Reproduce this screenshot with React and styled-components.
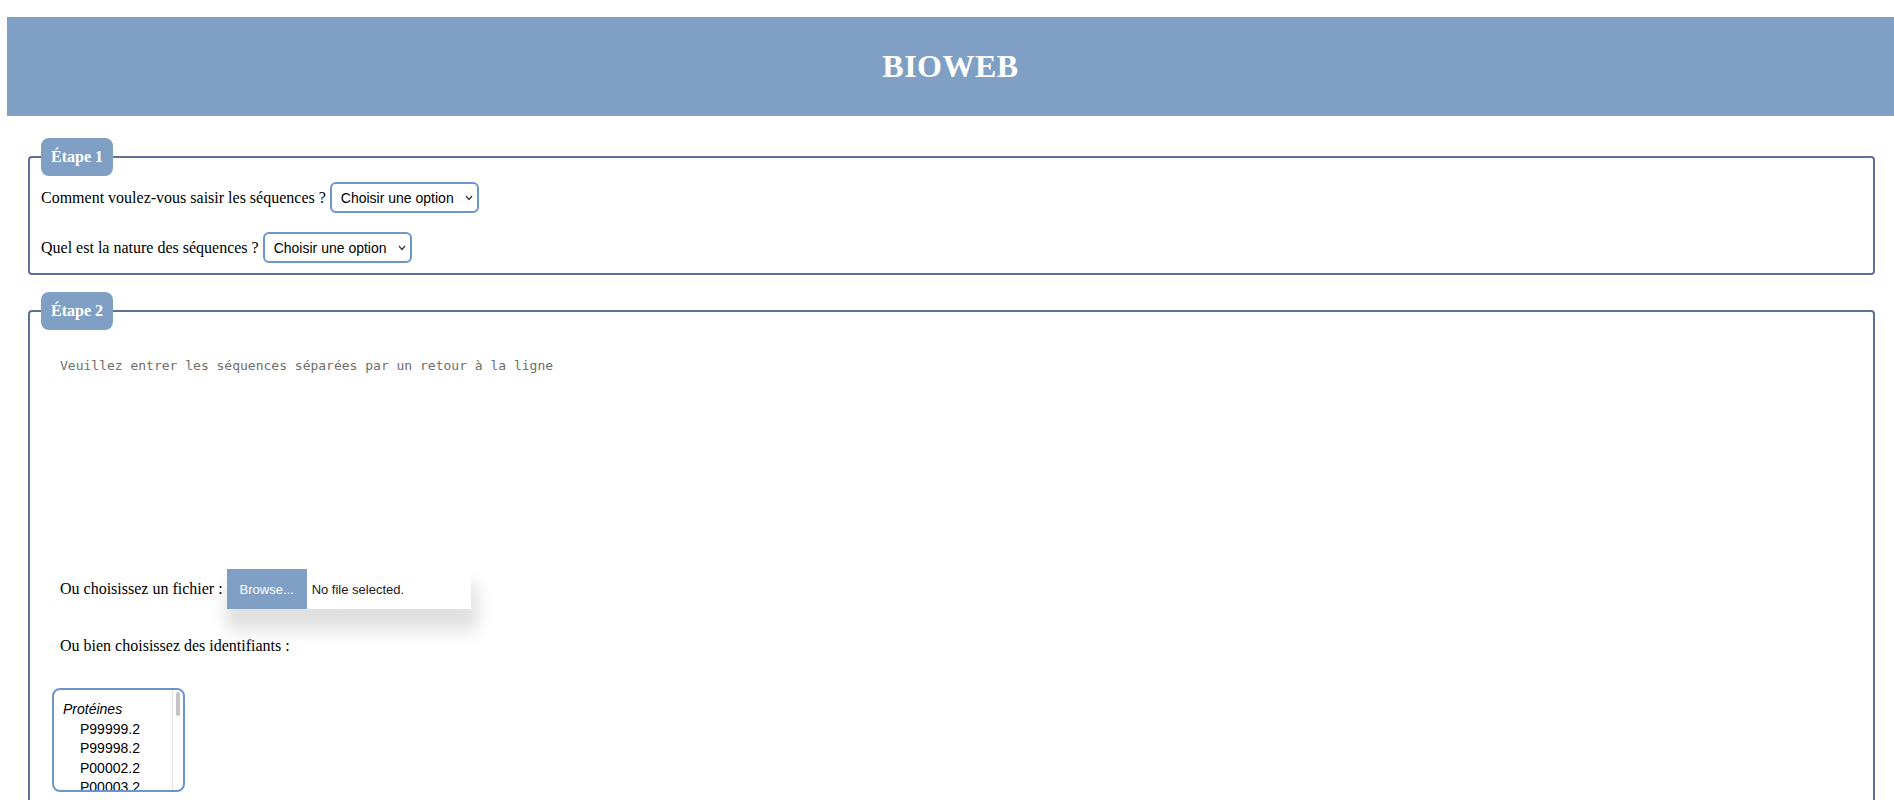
import styled, { createGlobalStyle } from "styled-components";

const GlobalStyle = createGlobalStyle`
  body {
    margin: 0;
    background: #ffffff;
    font-family: "Liberation Serif", "Times New Roman", serif;
    font-size: 16px;
    color: #000000;
  }
`;

const Header = styled.header`
  margin: 17px 0 0 7px;
  height: 99px;
  background: #7f9fc5;
  display: flex;
  align-items: center;
  justify-content: center;
`;

const Title = styled.h1`
  margin: 0;
  color: #ffffff;
  font-size: 32px;
  font-weight: bold;
  letter-spacing: 0.5px;
`;

const Main = styled.main`
  padding: 0 19px 0 28px;
`;

const Step = styled.fieldset`
  margin: ${(p) => p.$top}px 0 0 0;
  padding: 0 11px ${(p) => p.$bottom}px 11px;
  border: 2px solid #5f7190;
  border-radius: 4px;
  min-width: 0;
`;

const StepLegend = styled.legend`
  padding: 10px 10px;
  line-height: 18px;
  background: #7f9fc5;
  color: #ffffff;
  font-weight: bold;
  font-size: 16px;
  border-radius: 8px;
`;

const QuestionRow = styled.div`
  display: flex;
  align-items: center;
  gap: 4px;
  margin-top: ${(p) => p.$top}px;
`;

const SelectWrap = styled.span`
  position: relative;
  display: inline-flex;
`;

const Choice = styled.select`
  appearance: none;
  width: 149px;
  height: 31px;
  padding: 0 20px 0 9px;
  border: 2px solid #6d95cd;
  border-radius: 6px;
  background: #ffffff;
  font-family: "Liberation Sans", Arial, sans-serif;
  font-size: 14px;
  color: #000000;
`;

const Chevron = styled.svg`
  position: absolute;
  right: 6px;
  top: 50%;
  margin-top: -3px;
  pointer-events: none;
`;

const Block = styled.div`
  padding-left: 19px;
`;

const Sequences = styled.textarea`
  display: block;
  box-sizing: border-box;
  width: 100%;
  height: 215px;
  margin-top: 14px;
  padding: 14px 0 0 0;
  border: none;
  outline: none;
  resize: none;
  font-family: "DejaVu Sans Mono", "Liberation Mono", monospace;
  font-size: 13px;
  color: #333333;
  &::placeholder {
    color: #6e6e6e;
  }
`;

const FileRow = styled.div`
  display: flex;
  align-items: center;
  gap: 4px;
  margin-top: 10px;
`;

const FilePicker = styled.label`
  display: flex;
  align-items: center;
  width: 244px;
  height: 40px;
  background: #ffffff;
  box-shadow: 3px 18px 16px 4px rgba(0, 0, 0, 0.12);
  font-family: "Liberation Sans", Arial, sans-serif;
  font-size: 13px;
  cursor: pointer;
  input {
    display: none;
  }
`;

const BrowseButton = styled.span`
  display: flex;
  align-items: center;
  justify-content: center;
  width: 80px;
  height: 100%;
  background: #7f9fc5;
  color: #ffffff;
`;

const FileName = styled.span`
  padding-left: 5px;
  color: #1a1a1a;
`;

const Text = styled.p`
  margin: 28px 0 0 0;
  line-height: 18px;
`;

const Listbox = styled.div`
  box-sizing: border-box;
  display: flex;
  width: 133px;
  height: 104px;
  margin: 33px 0 0 -8px;
  border: 2px solid #6d95cd;
  border-radius: 8px;
  overflow: hidden;
  font-family: "Liberation Sans", Arial, sans-serif;
  font-size: 14px;
  color: #000000;
`;

const Items = styled.div`
  flex: 1;
  padding: 10px 0 0 9px;
  overflow: hidden;
`;

const ScrollTrack = styled.div`
  width: 11px;
  padding: 2px 3px 0 3px;
  box-sizing: border-box;
  border-left: 1px solid #e2e2e2;
`;

const ScrollThumb = styled.div`
  height: 24px;
  background: #c4c4c4;
  border-radius: 3px;
`;

const GroupLabel = styled.div`
  font-style: italic;
  line-height: 19.5px;
`;

const Option = styled.div`
  padding-left: 17px;
  line-height: 19.5px;
  white-space: nowrap;
`;

const ids = ["P99999.2", "P99998.2", "P00002.2", "P00003.2"];

function Select({ children }) {
  return (
    <SelectWrap>
      <Choice defaultValue="">{children}</Choice>
      <Chevron width="8" height="6" viewBox="0 0 8 6">
        <polyline points="1,1 4,4.5 7,1" fill="none" stroke="#333" strokeWidth="1.2" />
      </Chevron>
    </SelectWrap>
  );
}

export default function App() {
  return (
    <>
      <GlobalStyle />
      <Header>
        <Title>BIOWEB</Title>
      </Header>
      <Main>
        <Step $top={22} $bottom={10}>
          <StepLegend>Étape 1</StepLegend>
          <QuestionRow $top={6}>
            Comment voulez-vous saisir les séquences ?
            <Select>
              <option value="">Choisir une option</option>
              <option value="texte">Texte</option>
              <option value="fichier">Fichier</option>
            </Select>
          </QuestionRow>
          <QuestionRow $top={19}>
            Quel est la nature des séquences ?
            <Select>
              <option value="">Choisir une option</option>
              <option value="adn">ADN</option>
              <option value="proteine">Protéine</option>
            </Select>
          </QuestionRow>
        </Step>
        <Step $top={17} $bottom={20}>
          <StepLegend>Étape 2</StepLegend>
          <Block>
            <Sequences placeholder="Veuillez entrer les séquences séparées par un retour à la ligne" />
            <FileRow>
              Ou choisissez un fichier :
              <FilePicker>
                <input type="file" />
                <BrowseButton>Browse...</BrowseButton>
                <FileName>No file selected.</FileName>
              </FilePicker>
            </FileRow>
            <Text>Ou bien choisissez des identifiants :</Text>
            <Listbox role="listbox">
              <Items>
                <GroupLabel>Protéines</GroupLabel>
                {ids.map((id) => (
                  <Option key={id} role="option">
                    {id}
                  </Option>
                ))}
              </Items>
              <ScrollTrack>
                <ScrollThumb />
              </ScrollTrack>
            </Listbox>
          </Block>
        </Step>
      </Main>
    </>
  );
}
